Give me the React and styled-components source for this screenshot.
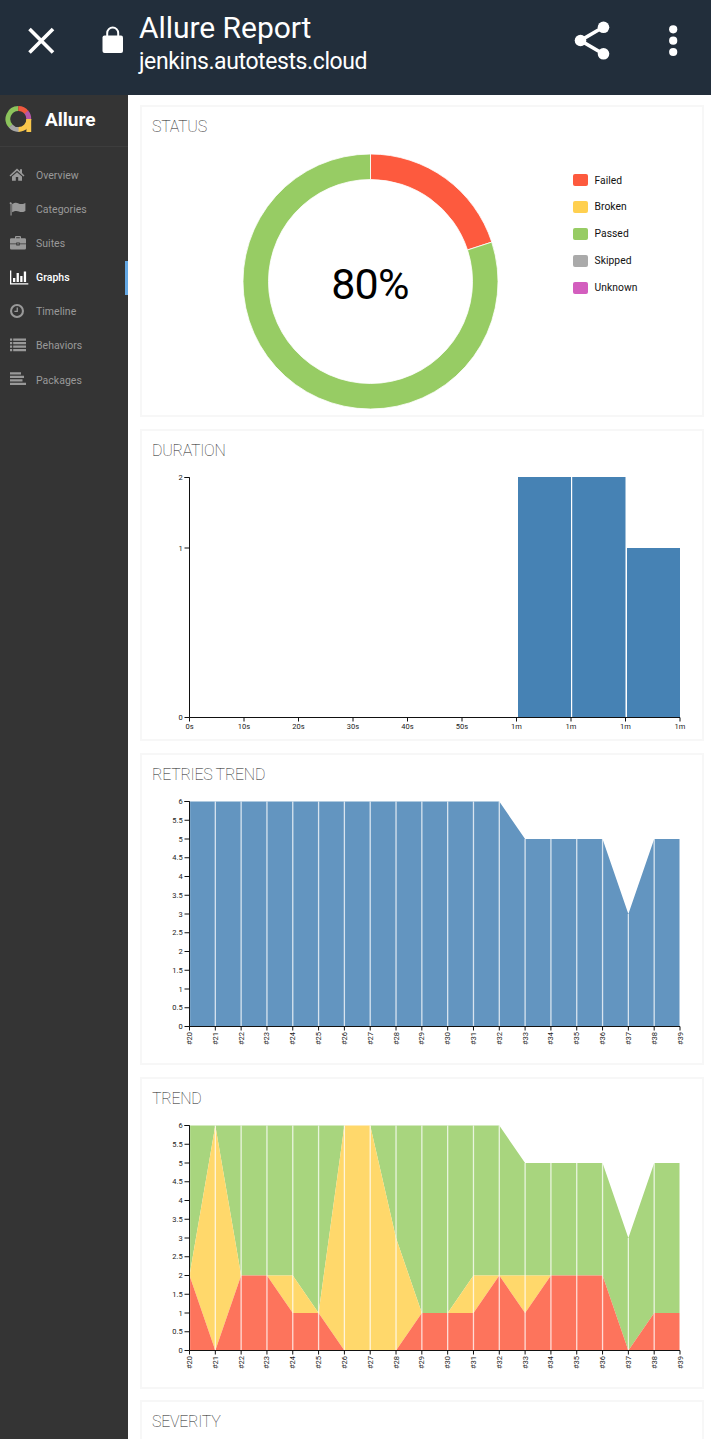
import React from 'react';
import styled, { createGlobalStyle } from 'styled-components';

const GlobalStyle = createGlobalStyle`
  *, *::before, *::after { box-sizing: border-box; }
  body { margin: 0; background: #fff; font-family: Roboto, "Liberation Sans", sans-serif; }
`;

const Page = styled.div`
  display: flex;
  flex-direction: column;
  width: 711px;
  height: 1439px;
  overflow: hidden;
`;

const BrowserBar = styled.header`
  flex: none;
  display: flex;
  height: 95px;
  background: #222e3b;
  color: #fff;
`;

const BarIcon = styled.svg`
  flex: none;
  display: block;
  width: ${(p) => p.$w}px;
  height: 95px;
`;

const Address = styled.div`
  flex: 1;
  padding-top: 10px;
  white-space: nowrap;
`;

const PageTitle = styled.div`
  font-size: 30px;
  line-height: 35px;
  letter-spacing: -0.05px;
`;

const PageHost = styled.div`
  margin-top: 2px;
  font-size: 23px;
  line-height: 29px;
  letter-spacing: -0.4px;
`;

const Body = styled.div`
  flex: 1;
  display: flex;
  min-height: 0;
`;

const Sidebar = styled.nav`
  flex: none;
  width: 128px;
  background: #343434;
`;

const Brand = styled.div`
  display: flex;
  align-items: center;
  height: 52px;
  padding: 0 0 3px 5px;
  border-bottom: 1px solid #3d3d3d;
  color: #fff;
  font-size: 19px;
  font-weight: 700;
`;

const BrandLogo = styled.svg`
  display: block;
  width: 28px;
  height: 28px;
  margin-right: 12px;
`;

const Menu = styled.ul`
  margin: 0;
  padding: 11.2px 0 0;
  list-style: none;
`;

const MenuItem = styled.li`
  display: flex;
  align-items: center;
  height: 34.15px;
  padding-left: 9px;
  border-right: 3px solid ${(p) => (p.$active ? '#64a8e4' : 'transparent')};
  color: ${(p) => (p.$active ? '#fff' : '#999')};
  font-size: 10.5px;
  font-weight: ${(p) => (p.$active ? 500 : 400)};
  letter-spacing: 0.02px;
`;

const MenuIcon = styled.svg`
  display: block;
  width: 20px;
  height: 18px;
  margin-right: 7px;
  fill: currentColor;
`;

const Cards = styled.main`
  flex: 1;
  display: flex;
  flex-direction: column;
  gap: 11.85px;
  padding: 10px 7px 0 12px;
`;

const Card = styled.section`
  flex: none;
  height: 312px;
  border: 2px solid #f7f7f7;
  background: #fff;
`;

const CardTitle = styled.h2`
  height: 41px;
  margin: 0;
  padding: 0 0 0 10px;
  color: #222;
  font-size: 16px;
  font-weight: 100;
  line-height: 40px;
  letter-spacing: -0.3px;
  text-transform: uppercase;
`;

const StatusBody = styled.div`
  display: flex;
`;

const Plot = styled.svg`
  display: block;
  flex: none;
  width: ${(p) => p.$w || 560}px;
  height: 267px;
`;

const AxisText = styled.text`
  font-size: 7.5px;
  fill: #222;
`;

const Percent = styled.text`
  font-size: 43px;
  letter-spacing: -0.7px;
  fill: #000;
`;

const Legend = styled.ul`
  display: flex;
  flex-direction: column;
  margin: 0;
  padding: 18.6px 0 0;
  list-style: none;
`;

const LegendItem = styled.li`
  display: flex;
  align-items: center;
  height: 26.9px;
  font-size: 10.3px;
  letter-spacing: 0.05px;
  color: #111;
`;

const Swatch = styled.span`
  width: 15px;
  height: 12px;
  margin-right: 6.5px;
  border-radius: 2px;
  background: ${(p) => p.$color};
`;

const MENU = [
  ['Overview', <path d="M8 2.600.5 9.400l1 1.100L8 4.800l6.500 5.700 1-1.100-2.500-2.300V3.200h-2v2zM8 6.200l-5 4.300v4.300h3.800v-3.700h2.400v3.700H13v-4.300z" />],
  ['Categories', <path d="M1.2 2.2a1.3 1.3 0 0 1 1.4 2V15.400H1.500V4.200a1.200 1.200 0 0 1-.3-2zM3.100 4c3-1.600 4.700-1.400 6.500-.5s3.800.8 6.800-.6v8c-2.500 1.400-4.600 1.500-6.500.6s-4-.9-6.800.7z" />],
  ['Suites', <path d="M6 3.300V1.900Q6 1 7 1h4q1 0 1 .9v1.400h3.700Q17 3.300 17 4.600v4h-6.300V7.500H7.300v1.100H1v-4q0-1.300 1.300-1.300zM7.200 2.200v1.100h3.600V2.200zM1 9.300h6.300v1.300h3.400V9.300H17v4q0 1.200-1.300 1.200H2.300Q1 14.500 1 13.300zM8.300 8.300h1.400v1.300H8.300z" />],
  ['Graphs', <path d="M1 1.500h1.300v12.700h17v1.300H1zM4 9h2.300v4H4zM7.600 4h2.300v9H7.600zM11.200 7h2.300v6h-2.300zM14.800 2.500h2.300v10.500h-2.300z" />],
  ['Timeline', <path fillRule="evenodd" d="M8 1a7 7 0 1 1 0 14 7 7 0 0 1 0-14zm0 2.100a4.900 4.900 0 1 0 0 9.800 4.900 4.900 0 0 0 0-9.800zM7.600 4.400h1.300v4.700H5.400V7.800h2.200z" />],
  ['Behaviors', <path d="M1 1.500h2.200v2.300H1zM4.200 1.500h12.800v2.300H4.200zM1 5h2.200v2.300H1zM4.200 5h12.800v2.300H4.200zM1 8.500h2.200v2.300H1zM4.200 8.500h12.800v2.300H4.200zM1 12h2.200v2.300H1zM4.200 12h12.800v2.300H4.200z" />],
  ['Packages', <path d="M1 1.200h11v2.300H1zM1 4.700h14v2.300H1zM1 8.200h12.500v2.300H1zM1 11.700h16v2.300H1z" />],
];

const STATUSES = [
  ['Failed', '#fd5a3e'],
  ['Broken', '#ffd050'],
  ['Passed', '#97cc64'],
  ['Skipped', '#aaaaaa'],
  ['Unknown', '#d35ebe'],
];

const LEFT = 47.5;
const WIDTH = 490.5;
const BUILDS = Array.from({ length: 20 }, (_, i) => `#${20 + i}`);
const TOTAL = [6, 6, 6, 6, 6, 6, 6, 6, 6, 6, 6, 6, 6, 5, 5, 5, 5, 3, 5, 5];
const FAILED = [2, 0, 2, 2, 1, 1, 0, 0, 0, 1, 1, 1, 2, 1, 2, 2, 2, 0, 1, 1];
const NOT_PASSED = [2, 6, 2, 2, 2, 1, 6, 6, 3, 1, 1, 2, 2, 2, 2, 2, 2, 0, 1, 1];
const ZERO = TOTAL.map(() => 0);

const buildX = (i) => LEFT + (WIDTH / 19) * i;
const countY = (v) => 230.5 - 37.5 * v;

function bandPoints(low, high) {
  const top = high.map((v, i) => `${buildX(i)},${countY(v)}`);
  const bottom = low.map((v, i) => `${buildX(i)},${countY(v)}`).reverse();
  return top.concat(bottom).join(' ');
}

function Axes({ top, bottom, yTicks, xTicks, rotated }) {
  return (
    <g>
      <path d={`M${LEFT - 5} ${top}H${LEFT}V${bottom}H${LEFT + WIDTH}`} fill="none" stroke="#111" />
      {yTicks.map(([label, y]) => (
        <g key={label}>
          <path d={`M${LEFT - 5} ${y}h5`} stroke="#111" />
          <AxisText x={LEFT - 6.8} y={y + 2.7} textAnchor="end">{label}</AxisText>
        </g>
      ))}
      {xTicks.map(([label, x]) => (
        <g key={x}>
          <path d={`M${x} ${bottom}v4`} stroke="#111" />
          {rotated ? (
            <AxisText textAnchor="end" transform={`translate(${x + 2.5} ${bottom + 5.5}) rotate(-90)`}>{label}</AxisText>
          ) : (
            <AxisText x={x} y={bottom + 11.8} textAnchor="middle">{label}</AxisText>
          )}
        </g>
      ))}
    </g>
  );
}

function TrendPlot({ bands }) {
  const yTicks = Array.from({ length: 13 }, (_, i) => [String(i / 2), countY(i / 2)]);
  return (
    <Plot viewBox="0 0 560 267">
      {bands.map(([color, low, high]) => (
        <polygon key={color} points={bandPoints(low, high)} fill={color} />
      ))}
      {TOTAL.map((v, i) => (
        <path key={i} d={`M${buildX(i)} ${countY(v)}V230`} stroke="#fff" strokeOpacity="0.75" strokeWidth="1.3" />
      ))}
      <Axes top={5.5} bottom={230.5} yTicks={yTicks} xTicks={BUILDS.map((b, i) => [b, buildX(i)])} rotated />
    </Plot>
  );
}

function DurationPlot() {
  const step = WIDTH / 9;
  const labels = ['0s', '10s', '20s', '30s', '40s', '50s', '1m', '1m', '1m', '1m'];
  return (
    <Plot viewBox="0 0 560 267">
      <g fill="#4682b4">
        <rect x="376" y="5" width="53" height="240" />
        <rect x="430.2" y="5" width="53.3" height="240" />
        <rect x="485" y="76" width="53" height="169" />
      </g>
      <Axes
        top={5.5}
        bottom={245.5}
        yTicks={[['0', 245.5], ['1', 76], ['2', 5.5]]}
        xTicks={labels.map((l, i) => [l, LEFT + step * i])}
      />
    </Plot>
  );
}

function StatusPlot() {
  const cx = 228.5;
  const cy = 133.5;
  const point = (r, turn) => {
    const a = turn * Math.PI * 2;
    return `${cx + r * Math.sin(a)} ${cy - r * Math.cos(a)}`;
  };
  const arc = (from, to) => {
    const large = to - from > 0.5 ? 1 : 0;
    return `M${point(127.5, from)}A127.5 127.5 0 ${large} 1 ${point(127.5, to)}L${point(102, to)}A102 102 0 ${large} 0 ${point(102, from)}Z`;
  };
  return (
    <Plot $w={431} viewBox="0 0 431 267">
      <path d={arc(0, 0.2)} fill="#fd5a3e" stroke="#fff" strokeWidth="0.8" />
      <path d={arc(0.2, 1)} fill="#97cc64" stroke="#fff" strokeWidth="0.8" />
      <Percent x={cx - 0.5} y={cy + 17.5} textAnchor="middle">80%</Percent>
    </Plot>
  );
}

export default function App() {
  return (
    <Page>
      <GlobalStyle />
      <BrowserBar>
        <BarIcon $w={139} viewBox="0 0 139 95">
          <path d="M29.500 29 53 52.500M53 29 29.500 52.500" stroke="#fff" strokeWidth="3.600" />
          <rect x="102.500" y="35.500" width="20.500" height="17.500" rx="2" fill="#fff" />
          <path d="M107.200 36.500v-3.500a5.500 5.500 0 0 1 11 0v3.500" fill="none" stroke="#fff" strokeWidth="2" />
        </BarIcon>
        <Address>
          <PageTitle>Allure Report</PageTitle>
          <PageHost>jenkins.autotests.cloud</PageHost>
        </Address>
        <BarIcon $w={171} viewBox="0 0 171 95">
          <path d="M63.500 27 40.500 40.500l23 13.500" fill="none" stroke="#fff" strokeWidth="3.700" />
          <g fill="#fff">
            <circle cx="63.500" cy="27.300" r="5.800" />
            <circle cx="40.500" cy="40.500" r="5.800" />
            <circle cx="63.500" cy="53.800" r="5.800" />
            <circle cx="133.200" cy="29.300" r="4.100" />
            <circle cx="133.200" cy="40.700" r="4.100" />
            <circle cx="133.200" cy="52" r="4.100" />
          </g>
        </BarIcon>
      </BrowserBar>
      <Body>
        <Sidebar>
          <Brand>
            <BrandLogo viewBox="0 0 28 28" fill="none" strokeWidth="4.800">
              <path d="M5.800 21.200A10.500 10.500 0 0 1 13.300 3.500" stroke="#8cc35c" />
              <path d="M13.300 3.500A10.500 10.500 0 0 1 21.600 7.500" stroke="#f0593f" />
              <path d="M21.300 7.100A10.500 10.500 0 0 1 23.800 14.500" stroke="#b657a8" />
              <path d="M14 24.500A10.500 10.500 0 0 1 5.600 21" stroke="#a5a5a5" />
              <path d="M23.800 14A10.500 10.500 0 0 1 13.600 24.500" stroke="#f9c74b" />
              <path d="M21.400 14h4.800v13h-4.800z" fill="#f9c74b" stroke="none" />
            </BrandLogo>
            Allure
          </Brand>
          <Menu>
            {MENU.map(([label, shape]) => (
              <MenuItem key={label} $active={label === 'Graphs'}>
                <MenuIcon viewBox="0 0 20 18">{shape}</MenuIcon>
                {label}
              </MenuItem>
            ))}
          </Menu>
        </Sidebar>
        <Cards>
          <Card>
            <CardTitle>Status</CardTitle>
            <StatusBody>
              <StatusPlot />
              <Legend>
                {STATUSES.map(([label, color]) => (
                  <LegendItem key={label}>
                    <Swatch $color={color} />
                    {label}
                  </LegendItem>
                ))}
              </Legend>
            </StatusBody>
          </Card>
          <Card>
            <CardTitle>Duration</CardTitle>
            <DurationPlot />
          </Card>
          <Card>
            <CardTitle>Retries Trend</CardTitle>
            <TrendPlot bands={[['#6395c0', ZERO, TOTAL]]} />
          </Card>
          <Card>
            <CardTitle>Trend</CardTitle>
            <TrendPlot
              bands={[
                ['#a8d57e', NOT_PASSED, TOTAL],
                ['#ffd86b', FAILED, NOT_PASSED],
                ['#fd745c', ZERO, FAILED],
              ]}
            />
          </Card>
          <Card>
            <CardTitle>Severity</CardTitle>
          </Card>
        </Cards>
      </Body>
    </Page>
  );
}
